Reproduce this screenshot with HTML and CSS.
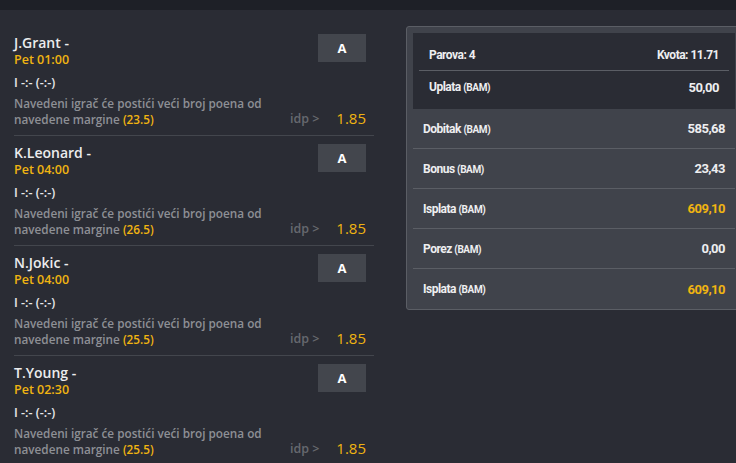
FILE: index.html
```html
<!DOCTYPE html>
<html>
<head>
<meta charset="utf-8">
<link rel="stylesheet" href="styles.css">
</head>
<body>
<div class="topbar"></div>
<div class="main">
  <div class="list">
    <div class="pick">
      <div class="pick-head">
        <div>
          <div class="name">J.Grant -</div>
          <div class="time">Pet 01:00</div>
        </div>
        <div class="btn">A</div>
      </div>
      <div class="score">I -:- (-:-)</div>
      <div class="pick-foot">
        <div class="desc">Navedeni igrač će postići veći broj poena od navedene margine <span class="margin">(23.5)</span></div>
        <div class="idp">idp &gt;</div>
        <div class="odd">1.85</div>
      </div>
    </div>
    <div class="pick">
      <div class="pick-head">
        <div>
          <div class="name">K.Leonard -</div>
          <div class="time">Pet 04:00</div>
        </div>
        <div class="btn">A</div>
      </div>
      <div class="score">I -:- (-:-)</div>
      <div class="pick-foot">
        <div class="desc">Navedeni igrač će postići veći broj poena od navedene margine <span class="margin">(26.5)</span></div>
        <div class="idp">idp &gt;</div>
        <div class="odd">1.85</div>
      </div>
    </div>
    <div class="pick">
      <div class="pick-head">
        <div>
          <div class="name">N.Jokic -</div>
          <div class="time">Pet 04:00</div>
        </div>
        <div class="btn">A</div>
      </div>
      <div class="score">I -:- (-:-)</div>
      <div class="pick-foot">
        <div class="desc">Navedeni igrač će postići veći broj poena od navedene margine <span class="margin">(25.5)</span></div>
        <div class="idp">idp &gt;</div>
        <div class="odd">1.85</div>
      </div>
    </div>
    <div class="pick">
      <div class="pick-head">
        <div>
          <div class="name">T.Young -</div>
          <div class="time">Pet 02:30</div>
        </div>
        <div class="btn">A</div>
      </div>
      <div class="score">I -:- (-:-)</div>
      <div class="pick-foot">
        <div class="desc">Navedeni igrač će postići veći broj poena od navedene margine <span class="margin">(25.5)</span></div>
        <div class="idp">idp &gt;</div>
        <div class="odd">1.85</div>
      </div>
    </div>
  </div>
  <div class="summary">
    <div class="stake-box">
      <div class="srow sep"><span>Parova: 4</span><span>Kvota: 11.71</span></div>
      <div class="srow tall"><span>Uplata <small>(BAM)</small></span><span class="num">50,00</span></div>
    </div>
    <div class="orow sep"><span>Dobitak <small>(BAM)</small></span><span class="num">585,68</span></div>
    <div class="orow sep"><span>Bonus <small>(BAM)</small></span><span class="num">23,43</span></div>
    <div class="orow sep"><span>Isplata <small>(BAM)</small></span><span class="num gold">609,10</span></div>
    <div class="orow sep"><span>Porez <small>(BAM)</small></span><span class="num">0,00</span></div>
    <div class="orow last"><span>Isplata <small>(BAM)</small></span><span class="num gold">609,10</span></div>
  </div>
</div>
</body>
</html>
```

FILE: styles.css
```css
*, *::before, *::after { box-sizing: border-box; }
html, body {
  margin: 0;
  padding: 0;
  background: #2a2c34;
  width: 736px;
  height: 463px;
  overflow: hidden;
}
body {
  font-family: "Open Sans", "Liberation Sans", sans-serif;
  color: #e8e8ea;
}
.topbar {
  height: 10px;
  background: #1e2027;
}
.main {
  display: flex;
  align-items: flex-start;
  gap: 32px;
  padding-left: 14px;
}
.list {
  width: 360px;
  flex: none;
  padding-top: 24px;
}
.pick {
  padding: 0 8px 8px 0;
  border-bottom: 1px solid #43464d;
  margin-bottom: 8px;
}
.pick-head {
  display: flex;
  justify-content: space-between;
  align-items: flex-start;
}
.name {
  font-size: 14px;
  line-height: 18px;
  font-weight: 600;
  color: #ececee;
}
.time {
  font-size: 12.5px;
  line-height: 16px;
  font-weight: 600;
  color: #f0b411;
}
.btn {
  width: 48px;
  height: 28px;
  background: #43464d;
  color: #fff;
  font-weight: 700;
  font-size: 13px;
  display: flex;
  align-items: center;
  justify-content: center;
}
.score {
  margin-top: 8px;
  font-size: 12.5px;
  line-height: 14px;
  font-weight: 600;
  color: #e8e8ea;
}
.pick-foot {
  margin-top: 5px;
  display: flex;
  align-items: flex-end;
}
.desc {
  width: 276px;
  flex: none;
  font-size: 11.75px;
  line-height: 16px;
  font-weight: 600;
  color: #8e9096;
}
.margin { color: #f0b411; }
.idp {
  font-size: 12.5px;
  line-height: 16px;
  color: #66696f;
  font-weight: 600;
}
.odd {
  margin-left: auto;
  font-size: 15px;
  line-height: 18px;
  color: #f0b411;
  font-weight: 400;
}
.summary {
  width: 336px;
  flex: none;
  margin-top: 16px;
  background: #40434b;
  border: 1px solid #5b5e65;
  border-radius: 3px;
  padding: 6px 6px 0;
  font-family: "Roboto", "Liberation Sans", sans-serif;
  font-weight: 700;
  font-size: 12px;
  letter-spacing: -0.5px;
  color: #eeeef0;
}
.summary small {
  font-size: 10px;
  letter-spacing: -0.4px;
}
.num { font-size: 13px; }
.stake-box {
  background: #2a2c34;
  padding: 6px 6px;
}
.srow, .orow {
  display: flex;
  justify-content: space-between;
  align-items: center;
  padding: 0 10px;
}
.srow { height: 32px; }
.orow { height: 40px; }
.sep { border-bottom: 1px solid #5b5e65; }
.gold { color: #f0b411; }
```
